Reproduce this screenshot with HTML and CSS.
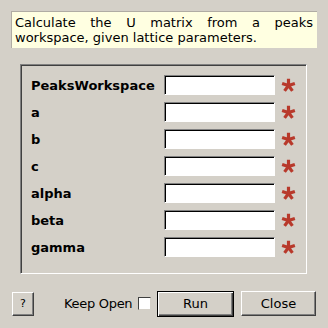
FILE: index.html
```html
<!DOCTYPE html>
<html>
<head>
<meta charset="utf-8">
<link rel="stylesheet" href="styles.css">
</head>
<body>
<div class="dialog">
  <div class="desc">Calculate the U matrix from a peaks workspace, given lattice parameters.</div>
  <div class="group">
    <div class="row"><span class="label">PeaksWorkspace</span><span class="field"></span><svg class="star" viewBox="0 0 16 16"><path d="M8 8V0.8M8 8L14.8 5.8M8 8L12.2 13.8M8 8L3.8 13.8M8 8L1.2 5.8" /></svg></div>
    <div class="row"><span class="label">a</span><span class="field"></span><svg class="star" viewBox="0 0 16 16"><path d="M8 8V0.8M8 8L14.8 5.8M8 8L12.2 13.8M8 8L3.8 13.8M8 8L1.2 5.8" /></svg></div>
    <div class="row"><span class="label">b</span><span class="field"></span><svg class="star" viewBox="0 0 16 16"><path d="M8 8V0.8M8 8L14.8 5.8M8 8L12.2 13.8M8 8L3.8 13.8M8 8L1.2 5.8" /></svg></div>
    <div class="row"><span class="label">c</span><span class="field"></span><svg class="star" viewBox="0 0 16 16"><path d="M8 8V0.8M8 8L14.8 5.8M8 8L12.2 13.8M8 8L3.8 13.8M8 8L1.2 5.8" /></svg></div>
    <div class="row"><span class="label">alpha</span><span class="field"></span><svg class="star" viewBox="0 0 16 16"><path d="M8 8V0.8M8 8L14.8 5.8M8 8L12.2 13.8M8 8L3.8 13.8M8 8L1.2 5.8" /></svg></div>
    <div class="row"><span class="label">beta</span><span class="field"></span><svg class="star" viewBox="0 0 16 16"><path d="M8 8V0.8M8 8L14.8 5.8M8 8L12.2 13.8M8 8L3.8 13.8M8 8L1.2 5.8" /></svg></div>
    <div class="row"><span class="label">gamma</span><span class="field"></span><svg class="star" viewBox="0 0 16 16"><path d="M8 8V0.8M8 8L14.8 5.8M8 8L12.2 13.8M8 8L3.8 13.8M8 8L1.2 5.8" /></svg></div>
  </div>
  <div class="buttons">
    <div class="btn help">?</div>
    <div class="keep">Keep Open</div>
    <div class="check"></div>
    <div class="btn run">Run</div>
    <div class="btn close">Close</div>
  </div>
</div>
</body>
</html>
```
FILE: styles.css
```css
html, body {
  margin: 0;
  padding: 0;
  background: #d4d0c8;
  width: 328px;
  height: 328px;
  overflow: hidden;
}
.dialog {
  font-family: "DejaVu Sans", sans-serif;
  font-size: 13px;
  color: #000;
  padding-top: 11px;
}
.desc {
  margin-left: 11px;
  width: 306px;
  height: 37px;
  box-sizing: border-box;
  background: #ffffe1;
  border-top: 1px solid #b0aca4;
  border-left: 1px solid #b0aca4;
  padding: 3px 4px 0 3px;
  line-height: 15px;
  text-align: justify;
  text-align-last: left;
}
.group {
  margin: 16px 0 0 20px;
  width: 287px;
  height: 210px;
  box-sizing: border-box;
  border-top: 1px solid #808080;
  border-left: 1px solid #808080;
  border-right: 1px solid #ffffff;
  border-bottom: 1px solid #ffffff;
  box-shadow: inset 1px 1px 0 #404040;
  padding: 10px 0 0 10px;
  display: flex;
  flex-direction: column;
  gap: 7px;
}
.row {
  display: flex;
  align-items: center;
  height: 20px;
}
.label {
  width: 133px;
  font-weight: bold;
  font-size: 13px;
}
.field {
  width: 111px;
  height: 20px;
  box-sizing: border-box;
  background: #fff;
  border-top: 1px solid #808080;
  border-left: 1px solid #808080;
  border-right: 1px solid #ffffff;
  border-bottom: 1px solid #ffffff;
  box-shadow: inset 1px 1px 0 #000;
}
.star {
  width: 15px;
  height: 15px;
  margin-left: 6px;
  fill: none;
  stroke: #b8392b;
  stroke-width: 3.4;
  stroke-linecap: butt;
}
.buttons {
  display: flex;
  align-items: center;
  margin: 17px 0 0 12px;
  height: 25px;
}
.btn {
  box-sizing: border-box;
  background: #d4d0c8;
  border-top: 1px solid #ffffff;
  border-left: 1px solid #ffffff;
  border-right: 1px solid #404040;
  border-bottom: 1px solid #404040;
  box-shadow: inset -1px -1px 0 #808080;
  display: flex;
  align-items: center;
  justify-content: center;
  font-size: 13px;
}
.help {
  width: 22px;
  height: 24px;
  font-size: 11px;
}
.keep {
  margin-left: 30px;
  width: 69px;
  white-space: nowrap;
  letter-spacing: -0.3px;
}
.check {
  width: 13px;
  height: 13px;
  box-sizing: border-box;
  margin-left: 5px;
  background: #fff;
  border-top: 1px solid #404040;
  border-left: 1px solid #404040;
  border-right: 1px solid #d4d0c8;
  border-bottom: 1px solid #d4d0c8;
}
.run {
  margin-left: 6px;
  width: 77px;
  height: 26px;
  border: 1px solid #000;
  box-shadow: inset 1px 1px 0 #fff, inset -1px -1px 0 #404040, inset -2px -2px 0 #808080;
}
.close {
  margin-left: 7px;
  width: 75px;
  height: 25px;
}
```
